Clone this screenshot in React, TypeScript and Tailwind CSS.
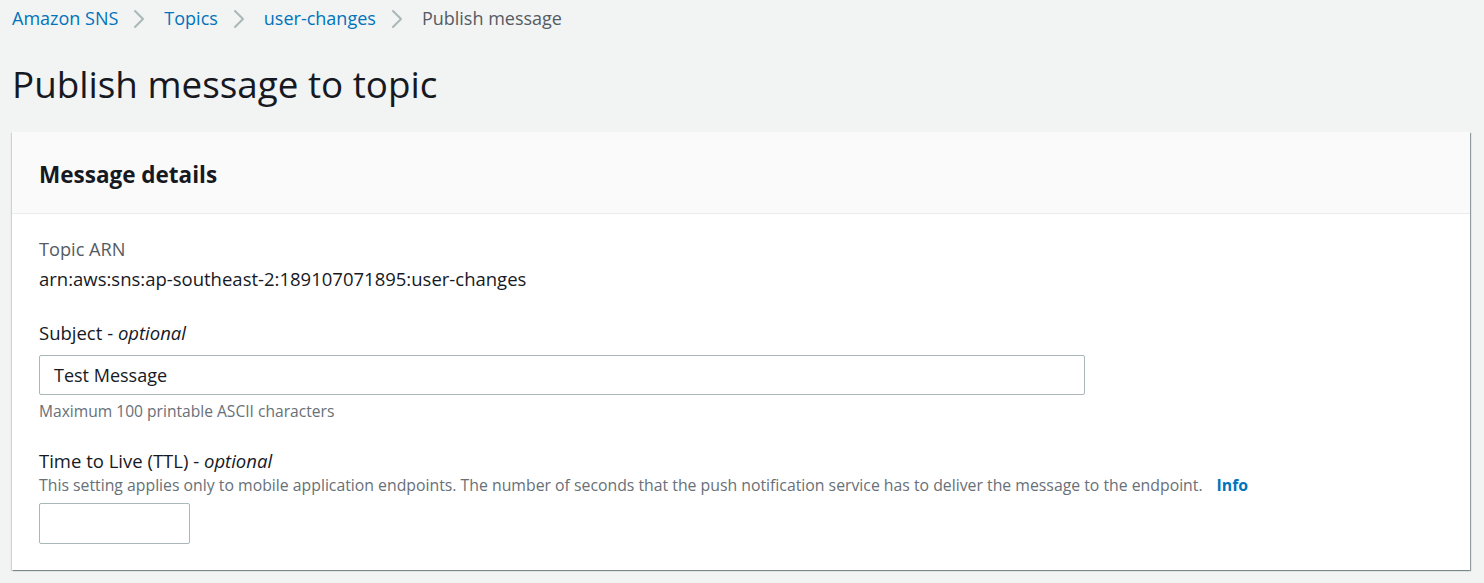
import { ChevronRight } from "lucide-react";

const font = { fontFamily: "'Open Sans', sans-serif" };

const crumbs = [
    { label: "Amazon SNS", link: true },
    { label: "Topics", link: true },
    { label: "user-changes", link: true },
    { label: "Publish message", link: false },
];

export default function App() {
    return (
        <div className="w-[1484px] h-[583px] bg-[#f2f3f3] overflow-hidden" style={font}>
            {/* BREADCRUMBS */}
            <nav className="flex items-center h-[37px] pl-[12px] text-[18px]">
                {crumbs.map((c, i) => (
                    <div key={c.label} className="flex items-center">
                        <span className={c.link ? "text-[#0073bb]" : "text-[#545b64]"}>{c.label}</span>
                        {i < crumbs.length - 1 && (
                            <ChevronRight className="w-[32px] h-[32px] ml-[5px] mr-[9px] text-[#aab7b8]" strokeWidth={1.5} />
                        )}
                    </div>
                ))}
            </nav>
            {/* PAGE HEADER */}
            <h1 className="pl-[12px] pt-[21px] h-[95px] text-[36.8px] leading-[52px] text-[#16191f]">Publish message to topic</h1>
            {/* CARD */}
            <div className="mx-[12px] w-[1458px] bg-white shadow-[1px_1px_1px_0_rgba(0,28,36,0.3),1px_1px_0_0_rgba(0,28,36,0.15),-1px_1px_1px_0_rgba(0,28,36,0.15)]">
                <div className="h-[82px] bg-[#fafafa] border-b border-[#eaeded] flex items-center px-[27px] pt-[4px]">
                    <h2 className="text-[22.5px] font-bold text-[#16191f]">Message details</h2>
                </div>
                <div className="px-[27px] pt-[22px] pb-[26px] text-[#16191f]">
                    <div className="text-[18.2px] text-[#545b64] leading-[26px]">Topic ARN</div>
                    <div className="text-[18.5px] leading-[34px]">arn:aws:sns:ap-southeast-2:189107071895:user-changes</div>

                    <div className="mt-[24px] text-[18.5px] leading-[26px]">
                        Subject - <i>optional</i>
                    </div>
                    <div className="mt-[9px] w-[1046px] h-[40px] border border-[#aab7b8] rounded-[2px] flex items-center px-[14px] text-[18px]">
                        Test Message
                    </div>
                    <div className="mt-[6px] text-[15.6px] text-[#687078] leading-[20px]">Maximum 100 printable ASCII characters</div>

                    <div className="mt-[27px] text-[18.5px] leading-[26px]">
                        Time to Live (TTL) - <i>optional</i>
                    </div>
                    <div className="text-[15.8px] text-[#687078] leading-[22px] flex">
                        <span>This setting applies only to mobile application endpoints. The number of seconds that the push notification service has to deliver the message to the endpoint.</span>
                        <span className="ml-[14px] font-bold text-[#0073bb]">Info</span>
                    </div>
                    <div className="mt-[7px] w-[151px] h-[41px] border border-[#aab7b8] rounded-[2px]" />
                </div>
            </div>
        </div>
    );
}
